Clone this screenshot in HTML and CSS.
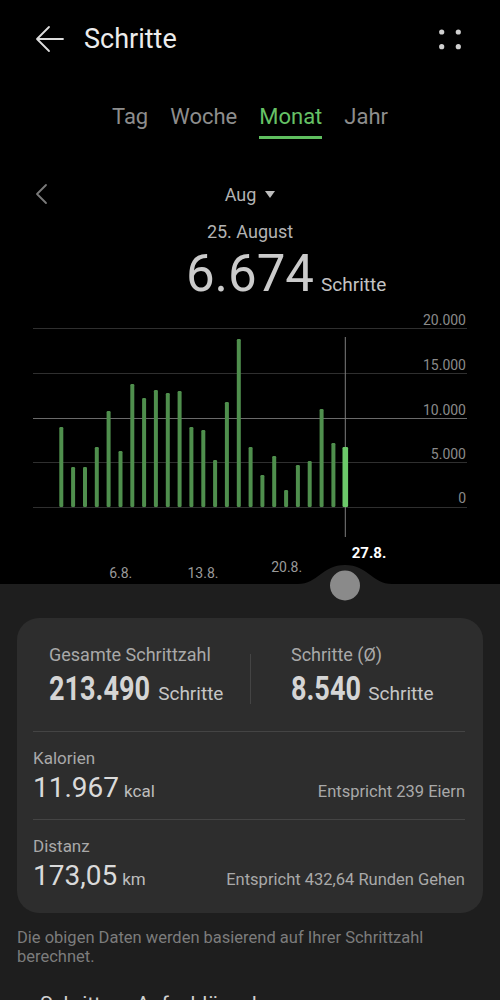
FILE: index.html
```html
<!DOCTYPE html>
<html lang="de">
<head>
  <meta charset="UTF-8" />
  <meta name="viewport" content="width=device-width, initial-scale=1.0"/>
  <title>Schritte</title>
  <link rel="stylesheet" href="styles.css">
</head>
<body>
  <header class="topbar">
    <svg class="back" width="30" height="28" viewBox="0 0 30 28">
      <path d="M28 14H3M14 2L2 14l12 12" fill="none" stroke="#dcdcdc" stroke-width="1.8" stroke-linecap="round" stroke-linejoin="round"/>
    </svg>
    <h1>Schritte</h1>
    <svg class="more" width="24" height="22" viewBox="0 0 24 22">
      <circle cx="3.7" cy="4" r="2.6" fill="#cfcfcf"/>
      <circle cx="20.3" cy="4" r="2.6" fill="#cfcfcf"/>
      <circle cx="3.7" cy="18.7" r="2.6" fill="#cfcfcf"/>
      <circle cx="20.3" cy="18.7" r="2.6" fill="#cfcfcf"/>
    </svg>
  </header>

  <nav class="tabs">
    <span class="tab">Tag</span>
    <span class="tab">Woche</span>
    <span class="tab active">Monat</span>
    <span class="tab">Jahr</span>
  </nav>

  <div class="period">
    <svg class="prev" width="14" height="22" viewBox="0 0 14 22">
      <path d="M11 2L2 11l9 9" fill="none" stroke="#7a7a7a" stroke-width="1.8" stroke-linecap="round" stroke-linejoin="round"/>
    </svg>
    <span class="month">Aug <span class="caret"></span></span>
  </div>
  <div class="day">25. August</div>
  <div class="big">
    <span></span>
    <span class="big-num">6.674</span>
    <span class="big-unit">Schritte</span>
  </div>

  <svg class="chart" width="500" height="282" viewBox="0 0 500 282">
    <g stroke="#2f2f2f" stroke-width="1">
      <line x1="33" y1="26.5" x2="467" y2="26.5"/>
      <line x1="33" y1="71.5" x2="467" y2="71.5"/>
      <line x1="33" y1="160.5" x2="467" y2="160.5"/>
      <line x1="33" y1="205.5" x2="467" y2="205.5"/>
    </g>
    <line x1="33" y1="116.5" x2="467" y2="116.5" stroke="#6a6a6a" stroke-width="1"/>
    <g class="ylabels" font-family="Roboto" font-size="14" fill="#8a8a8a" text-anchor="end">
      <text x="466" y="23">20.000</text>
      <text x="466" y="68">15.000</text>
      <text x="466" y="113">10.000</text>
      <text x="466" y="157">5.000</text>
      <text x="466" y="201">0</text>
    </g>
    <line x1="345.3" y1="35" x2="345.3" y2="235" stroke="#7d7d7d" stroke-width="1"/>
    <g fill="#4f8f4d">
      <rect x="59.3" y="125" width="4" height="80" rx="1.2"/>
      <rect x="71.1" y="165" width="4" height="40" rx="1.2"/>
      <rect x="83" y="165" width="4" height="40" rx="1.2"/>
      <rect x="94.8" y="145" width="4" height="60" rx="1.2"/>
      <rect x="106.6" y="109" width="4" height="96" rx="1.2"/>
      <rect x="118.5" y="149" width="4" height="56" rx="1.2"/>
      <rect x="130.3" y="82" width="4" height="123" rx="1.2"/>
      <rect x="142.1" y="96" width="4" height="109" rx="1.2"/>
      <rect x="153.9" y="88" width="4" height="117" rx="1.2"/>
      <rect x="165.8" y="91" width="4" height="114" rx="1.2"/>
      <rect x="177.6" y="89" width="4" height="116" rx="1.2"/>
      <rect x="189.4" y="125" width="4" height="80" rx="1.2"/>
      <rect x="201.3" y="128" width="4" height="77" rx="1.2"/>
      <rect x="213.1" y="158" width="4" height="47" rx="1.2"/>
      <rect x="224.9" y="100" width="4" height="105" rx="1.2"/>
      <rect x="236.8" y="37" width="4" height="168" rx="1.2"/>
      <rect x="248.6" y="145" width="4" height="60" rx="1.2"/>
      <rect x="260.4" y="173" width="4" height="32" rx="1.2"/>
      <rect x="272.2" y="154" width="4" height="51" rx="1.2"/>
      <rect x="284.1" y="188" width="4" height="17" rx="1.2"/>
      <rect x="295.9" y="163" width="4" height="42" rx="1.2"/>
      <rect x="307.7" y="159" width="4" height="46" rx="1.2"/>
      <rect x="319.6" y="107" width="4" height="98" rx="1.2"/>
      <rect x="331.4" y="141" width="4" height="64" rx="1.2"/>
    </g>
    <rect x="342.5" y="145" width="5.6" height="60" rx="1.2" fill="#6cc96a"/>
    <g font-family="Roboto" font-size="14" fill="#9a9a9a" text-anchor="middle">
      <text x="120.7" y="276">6.8.</text>
      <text x="203" y="276">13.8.</text>
      <text x="286.7" y="270">20.8.</text>
    </g>
    <text x="369" y="256" font-family="Roboto" font-size="15" font-weight="700" fill="#ffffff" text-anchor="middle">27.8.</text>
  </svg>

  <section class="panel">
    <svg class="knob" width="500" height="42" viewBox="0 0 500 42">
      <path d="M0 21H298C318 21 322 2 345 2S372 21 392 21H500V42H0Z" fill="#1e1e1e"/>
      <circle cx="345" cy="22.5" r="15" fill="#8a8a8a"/>
    </svg>

    <div class="card">
      <div class="totals">
        <div class="total first">
          <div class="label">Gesamte Schrittzahl</div>
          <div class="total-value"><span class="cond">213.490</span><span class="unit">Schritte</span></div>
        </div>
        <div class="vsep"></div>
        <div class="total">
          <div class="label">Schritte (Ø)</div>
          <div class="total-value"><span class="cond short">8.540</span><span class="unit">Schritte</span></div>
        </div>
      </div>

      <div class="metric">
        <div class="label">Kalorien</div>
        <div class="metric-row">
          <span class="value">11.967<span class="small-unit">kcal</span></span>
          <span class="equiv">Entspricht 239 Eiern</span>
        </div>
      </div>

      <div class="metric last">
        <div class="label">Distanz</div>
        <div class="metric-row">
          <span class="value">173,05<span class="small-unit">km</span></span>
          <span class="equiv">Entspricht 432,64 Runden Gehen</span>
        </div>
      </div>
    </div>

    <p class="note">Die obigen Daten werden basierend auf Ihrer Schrittzahl berechnet.</p>
    <h2 class="section-title">Schritte – Aufschlüsselung</h2>
  </section>
</body>
</html>
```

FILE: styles.css
```css
body {
  margin: 0;
  padding: 0;
  font-family: Roboto, 'Noto Sans', sans-serif;
  background: #000;
  color: #ddd;
  width: 500px;
  overflow: hidden;
}
.topbar {
  height: 78px;
  display: flex;
  align-items: center;
  padding: 0 38px 0 35px;
}
.topbar h1 {
  margin: 0 0 0 19px;
  font-size: 27px;
  font-weight: 400;
  color: #ececec;
  flex: 1;
}
.back {
  display: block;
}
.more {
  display: block;
  margin-top: -1px;
}
.tabs {
  display: flex;
  justify-content: center;
  gap: 22px;
  padding-top: 25px;
  height: 47px;
}
.tab {
  font-size: 22px;
  line-height: 28px;
  height: 33px;
  color: #8d8d8d;
}
.tab.active {
  color: #66c266;
  border-bottom: 3px solid #5fbf5f;
}
.period {
  display: grid;
  grid-template-columns: 1fr auto 1fr;
  align-items: center;
  height: 36px;
  margin-top: 26px;
}
.prev {
  display: block;
  margin-left: 35px;
}
.month {
  font-size: 18px;
  color: #b3b3b3;
  display: flex;
  align-items: center;
  gap: 9px;
}
.caret {
  width: 0;
  height: 0;
  border-left: 5px solid transparent;
  border-right: 5px solid transparent;
  border-top: 7px solid #bdbdbd;
}
.day {
  text-align: center;
  font-size: 18px;
  line-height: 24px;
  color: #b3b3b3;
  margin-top: 8px;
}
.big {
  display: grid;
  grid-template-columns: 1fr auto 1fr;
  align-items: baseline;
  margin-top: 2px;
  height: 56px;
}
.big-num {
  font-size: 51px;
  line-height: 56px;
  font-weight: 400;
  color: #cbcbcb;
}
.big-unit {
  font-size: 19px;
  color: #c4c4c4;
  margin-left: 7px;
}
.chart {
  display: block;
}
.panel {
  position: relative;
  background: #1e1e1e;
  padding: 34px 0 0;
  min-height: 420px;
}
.knob {
  position: absolute;
  top: -21px;
  left: 0;
}
.card {
  position: relative;
  margin: 0 17px;
  background: #2d2d2d;
  border-radius: 22px;
}
.totals {
  display: flex;
  align-items: center;
  padding: 25px 20px 17px 32px;
}
.total {
  flex: 1;
}
.total.first {
  flex: none;
  width: 201px;
}
.vsep {
  width: 1px;
  height: 50px;
  background: #444;
  margin: 0 40px 0 0;
}
.label {
  font-size: 17px;
  line-height: 22px;
  color: #a9a9a9;
}
.totals .label {
  font-size: 18px;
  line-height: 24px;
}
.total-value {
  margin-top: 3px;
  line-height: 38px;
  white-space: nowrap;
}
.cond {
  display: inline-block;
  font-size: 33px;
  font-weight: 700;
  color: #d5d5d5;
  transform: scaleX(0.82);
  transform-origin: left;
  margin-right: -21px;
}
.cond.short {
  margin-right: -15px;
}
.unit {
  font-size: 19px;
  color: #c6c6c6;
  margin-left: 7px;
}
.metric {
  margin: 0 18px 0 16px;
  border-top: 1px solid #444;
  padding: 15px 0 11px;
}
.metric.last {
  padding: 15px 0 17px;
}
.metric-row {
  display: flex;
  justify-content: space-between;
  align-items: baseline;
  margin-top: 2px;
}
.value {
  font-size: 28px;
  line-height: 34px;
  color: #dadada;
}
.small-unit {
  font-size: 17px;
  color: #bdbdbd;
  margin-left: 5px;
}
.equiv {
  font-size: 16.5px;
  color: #a9a9a9;
}
.note {
  margin: 15px 17px 0;
  font-size: 16.5px;
  line-height: 19px;
  color: #7c7c7c;
}
.section-title {
  margin: 26px 40px 0;
  font-size: 21px;
  font-weight: 400;
  color: #d0d0d0;
}
```
